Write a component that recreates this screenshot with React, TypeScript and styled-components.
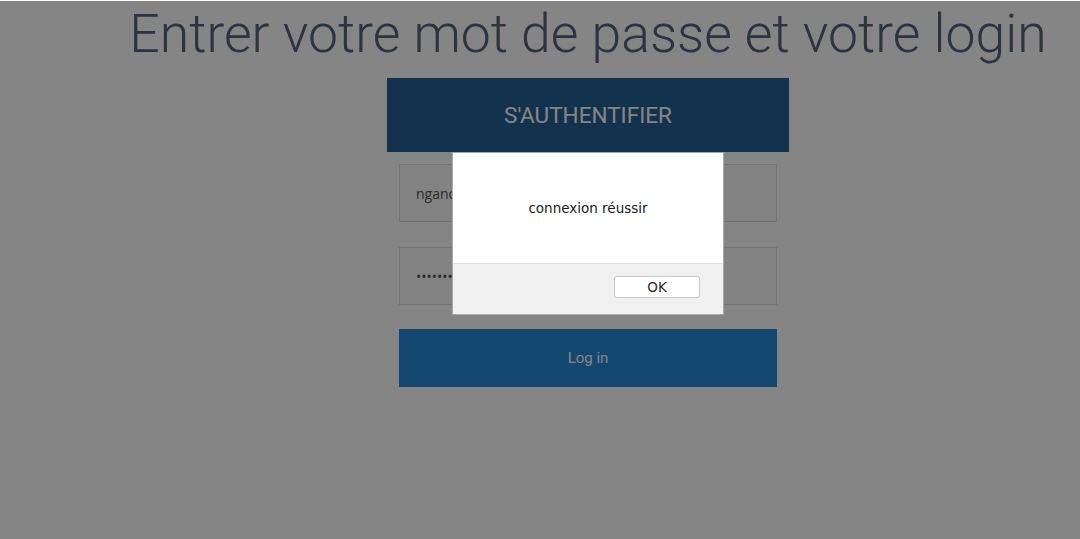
import React from 'react';
import styled, {createGlobalStyle} from 'styled-components';

const GlobalStyle = createGlobalStyle`
  html, body {
    margin: 0;
    padding: 0;
    background: #ffffff;
  }
  body {
    font-family: Roboto, "Liberation Sans", sans-serif;
  }
`

const Page = styled.div`
  width: 1080px;
  height: 539px;
  position: relative;
  overflow: hidden;
  background: #ffffff;
`

const Column = styled.div`
  display: flex;
  flex-direction: column;
  align-items: center;
  padding-left: 96px;
`

const Title = styled.h1`
  margin: 0;
  padding-top: 2px;
  font-family: Roboto, "Liberation Sans", sans-serif;
  font-weight: 300;
  font-size: 53.5px;
  line-height: 64px;
  color: #53647b;
  white-space: nowrap;
`

const Panel = styled.div`
  width: 402px;
  margin-top: 12px;
  display: flex;
  flex-direction: column;
  align-items: center;
`

const PanelHeader = styled.div`
  width: 100%;
  height: 74px;
  background: #256194;
  color: #ffffff;
  font-size: 22.5px;
  font-weight: 400;
  display: flex;
  align-items: center;
  justify-content: center;
  text-transform: uppercase;
`

const Form = styled.form`
  width: 378px;
  display: flex;
  flex-direction: column;
  gap: 25px;
  padding-top: 12px;
`

const Field = styled.input`
  box-sizing: border-box;
  width: 100%;
  height: 58px;
  border: 1px solid #dcdcdc;
  background: #fafafa;
  padding: 0 16px;
  font-family: "Open Sans", "Liberation Sans", sans-serif;
  font-size: 14px;
  color: #555555;
  outline: none;
`

const Submit = styled.button`
  width: 100%;
  height: 58px;
  margin-top: -1px;
  border: none;
  background: #288ad9;
  color: #ffffff;
  font-family: Roboto, "Liberation Sans", sans-serif;
  font-size: 15px;
`

const Overlay = styled.div`
  position: absolute;
  inset: 1px 0 0 0;
  background: rgba(0, 0, 0, 0.478);
`

const Dialog = styled.div`
  position: absolute;
  left: 452px;
  top: 152px;
  width: 272px;
  height: 163px;
  box-sizing: border-box;
  border: 1px solid #a8a8a8;
  background: #ffffff;
  display: flex;
  flex-direction: column;
  font-family: "DejaVu Sans", "Liberation Sans", sans-serif;
`

const DialogBody = styled.div`
  height: 110px;
  display: flex;
  align-items: center;
  justify-content: center;
  font-size: 13.5px;
  color: #1a1a1a;
  padding-bottom: 1px;
  box-sizing: border-box;
`

const DialogFooter = styled.div`
  flex: 1;
  background: #f0f0f0;
  border-top: 1px solid #dedede;
  display: flex;
  justify-content: flex-end;
  align-items: flex-start;
  padding: 12px 23px 0 0;
`

const OkButton = styled.button`
  width: 86px;
  height: 22px;
  border: 1px solid #c8c8c8;
  border-radius: 3px;
  background: #ffffff;
  font-family: "DejaVu Sans", "Liberation Sans", sans-serif;
  font-size: 13.5px;
  color: #2a2a2a;
  padding: 0;
`

export default function App(): React.ReactElement {
  return (
    <Page>
      <GlobalStyle />
      <Column>
        <Title>Entrer votre mot de passe et votre login</Title>
        <Panel>
          <PanelHeader>S'authentifier</PanelHeader>
          <Form onSubmit={(e) => e.preventDefault()}>
            <Field type="text" defaultValue="ngandoudavid" />
            <Field type="password" defaultValue="password" />
            <Submit type="submit">Log in</Submit>
          </Form>
        </Panel>
      </Column>
      <Overlay />
      <Dialog role="alertdialog">
        <DialogBody>connexion réussir</DialogBody>
        <DialogFooter>
          <OkButton>OK</OkButton>
        </DialogFooter>
      </Dialog>
    </Page>
  )
}
